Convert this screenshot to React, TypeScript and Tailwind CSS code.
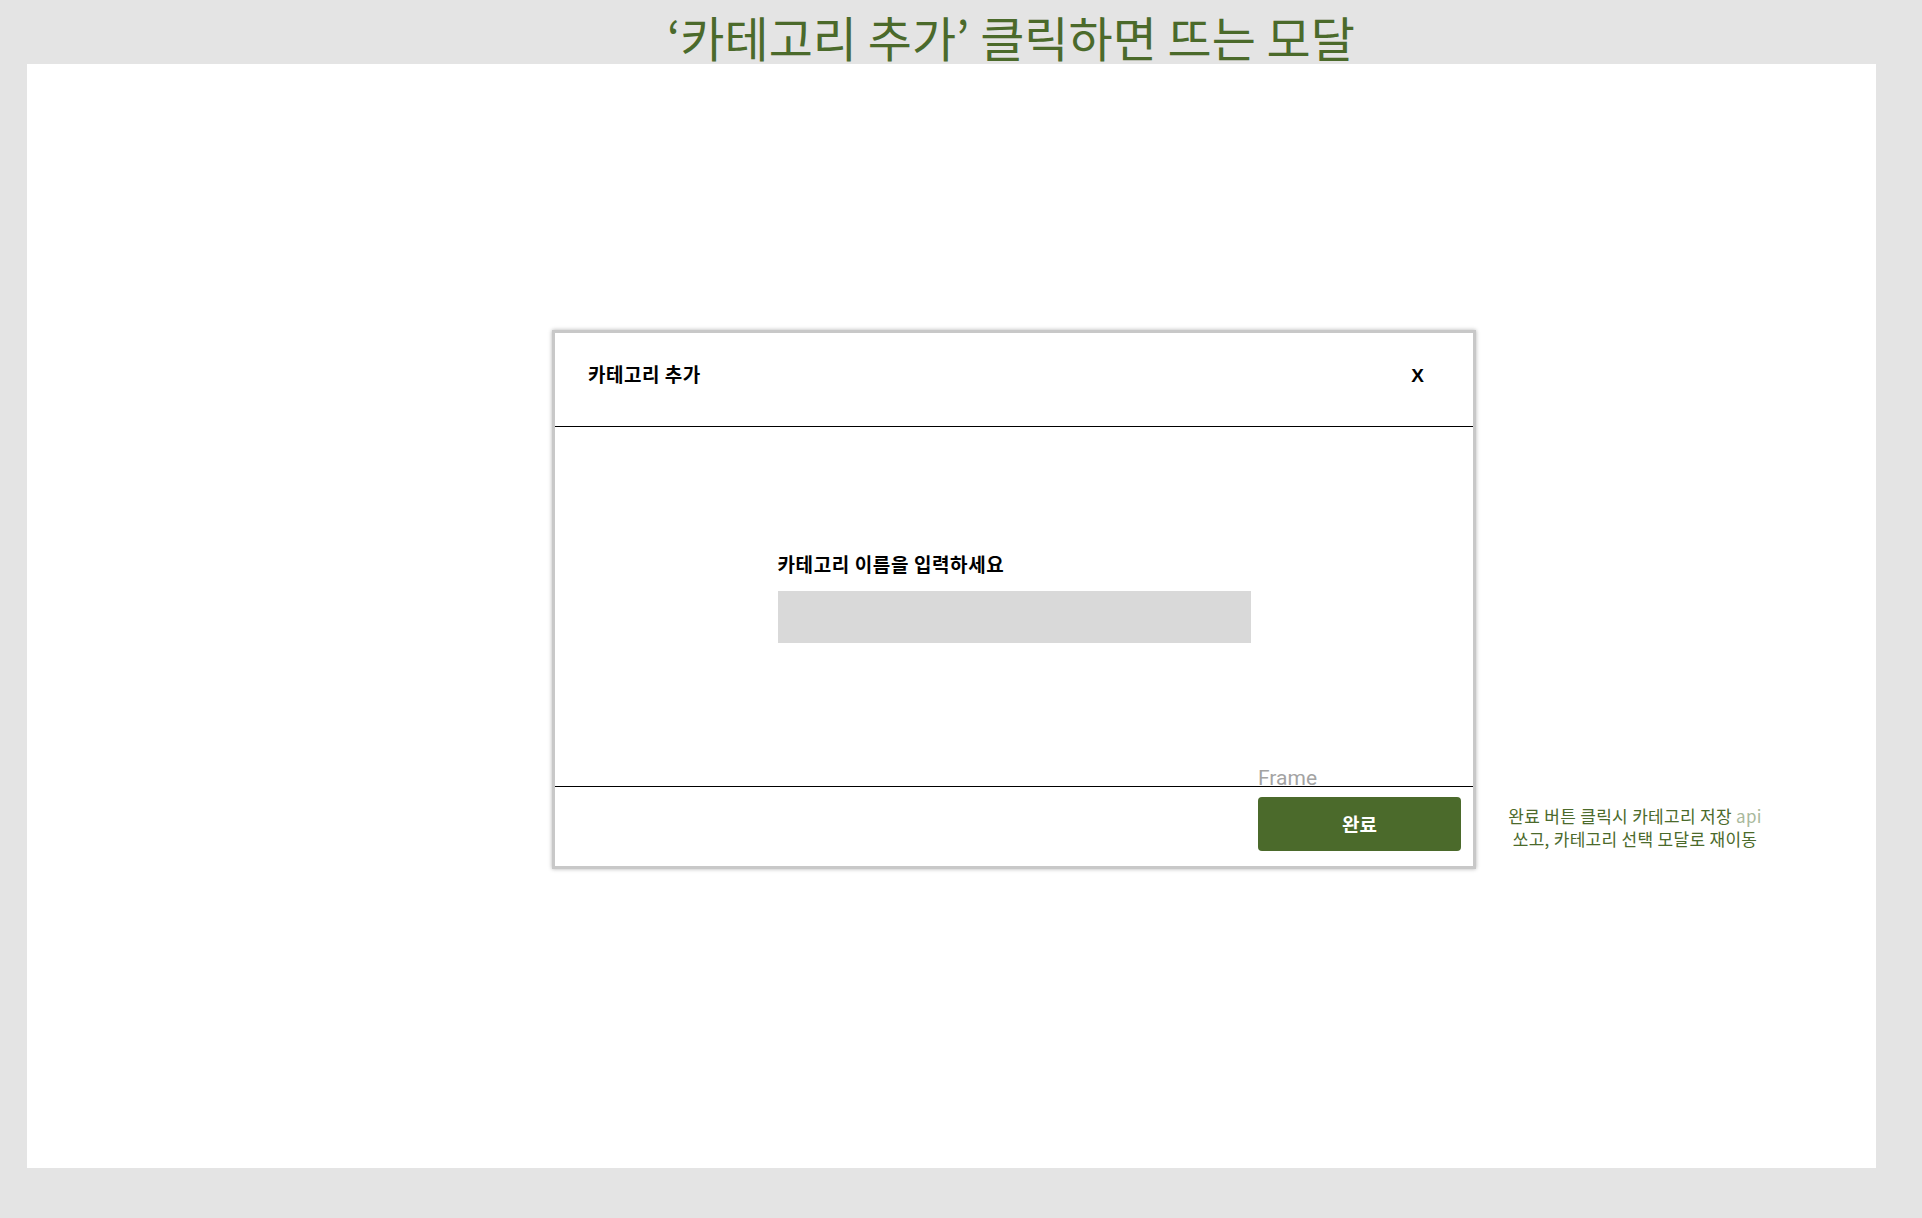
export default function App() {
  return (
    <div
      className="min-h-[1218px] w-[1922px] bg-[#e4e4e4]"
      style={{ fontFamily: '"Noto Sans CJK KR", "Noto Sans", sans-serif' }}
    >
      <div className="flex h-[64px] items-center pl-[667px] pt-[8px]">
        <h1 className="text-[48px] font-normal leading-none text-[#4b6a2b]">
          ‘카테고리 추가’ 클릭하면 뜨는 모달
        </h1>
      </div>

      <div className="ml-[27px] flex h-[1104px] w-[1849px] items-start bg-white pl-[525px] pt-[266px]">
        {/* modal */}
        <div className="relative flex h-[539px] w-[924px] flex-col border-[3px] border-[#c8c8c8] bg-white shadow-[0_0_4px_rgba(0,0,0,0.3)]">
          <div className="flex h-[93px] items-center justify-between pb-[10px] pl-[33px] pr-[49px]">
            <span className="text-[19px] font-bold tracking-[0.5px] text-black">카테고리 추가</span>
            <span
              className="pt-[4px] text-[19px] font-bold text-black"
              style={{ fontFamily: '"Liberation Sans", Arial, sans-serif' }}
            >
              X
            </span>
          </div>
          <div className="h-px bg-black" />

          <div className="flex h-[359px] flex-col items-center pt-[124px]">
            <div className="w-[473px]">
              <div className="text-[19px] font-bold leading-[26px] tracking-[0.6px] text-black">
                카테고리 이름을 입력하세요
              </div>
              <div className="mt-[14px] h-[52px] w-full bg-[#d9d9d9]" />
            </div>
          </div>

          <div className="h-px bg-black" />
          <div className="flex flex-1 items-start justify-end pr-[12px] pt-[10px]">
            <button className="flex h-[54px] w-[203px] items-center justify-center rounded-[4px] bg-[#4b6a2b] text-[19px] font-bold text-white">
              완료
            </button>
          </div>

          <span
            className="absolute left-[703px] top-[435px] text-[21px] leading-none text-[#a3a3a3]"
            style={{ fontFamily: 'Roboto, "Noto Sans", sans-serif' }}
          >
            Frame
          </span>
        </div>

        {/* annotation */}
        <div className="ml-[19px] mt-[474px] w-[280px] whitespace-nowrap text-center text-[17px] leading-[23px] tracking-[0.3px] text-[#4b6a2b]">
          <p>
            완료 버튼 클릭시 카테고리 저장 <span className="text-[#a9b99c]">api</span>
          </p>
          <p>쏘고, 카테고리 선택 모달로 재이동</p>
        </div>
      </div>
    </div>
  );
}
